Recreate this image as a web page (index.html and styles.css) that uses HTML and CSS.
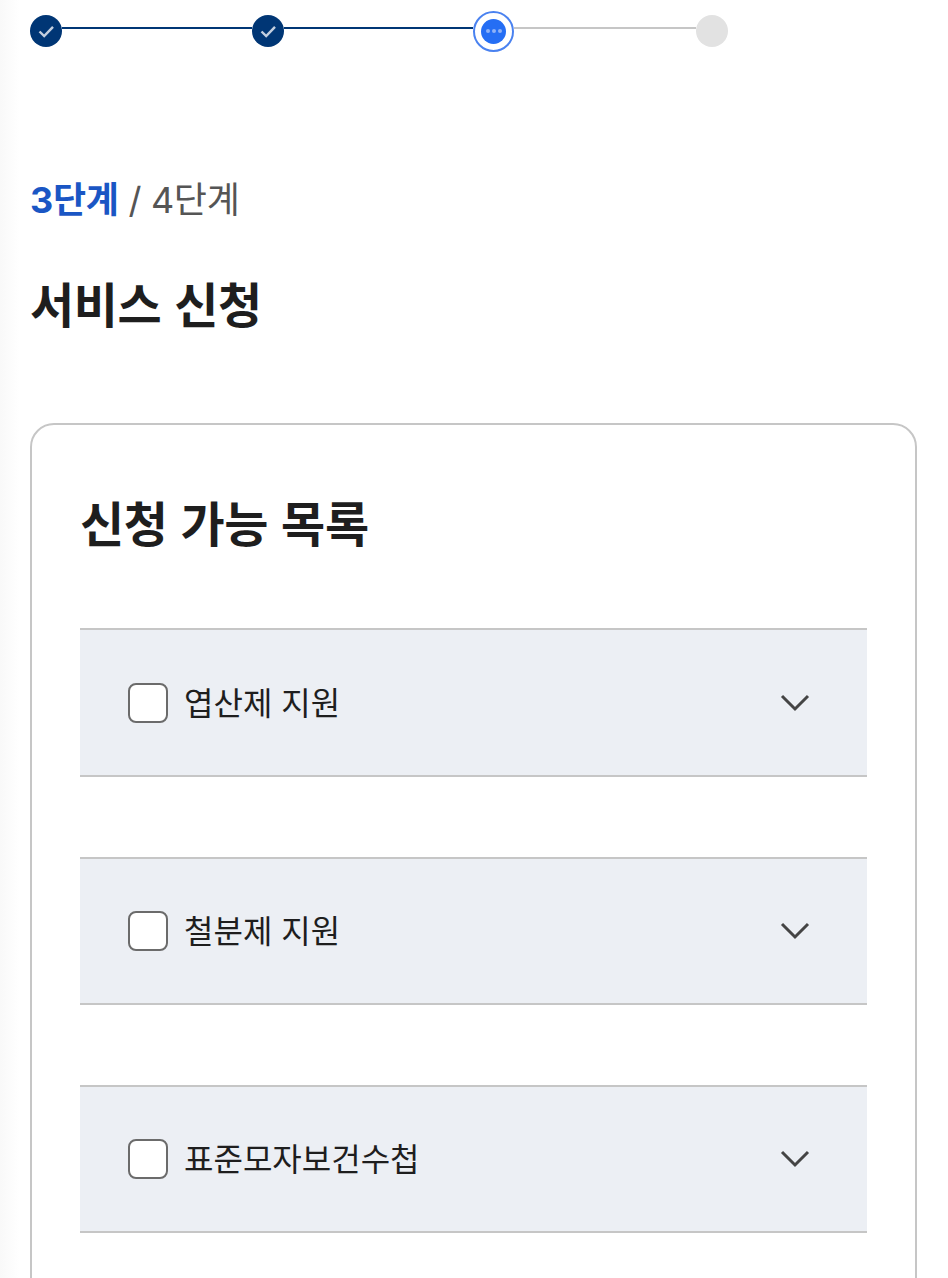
FILE: index.html
```html
<!DOCTYPE html>
<html lang="ko">

<head>
    <meta charset="UTF-8">
    <meta name="viewport" content="width=device-width, initial-scale=1.0">
    <title>서비스 신청</title>
    <link rel="stylesheet" href="styles.css">
</head>

<body>
    <main class="page">
        <ol class="stepper">
            <li class="step step-done">
                <svg class="step-icon" viewBox="0 0 18 14" width="17" height="13" aria-hidden="true">
                    <path d="M1.5 7 L6.5 12 L16 2" fill="none" stroke="#c3cfdf" stroke-width="2.6" />
                </svg>
            </li>
            <li class="step-line step-line-done"></li>
            <li class="step step-done">
                <svg class="step-icon" viewBox="0 0 18 14" width="17" height="13" aria-hidden="true">
                    <path d="M1.5 7 L6.5 12 L16 2" fill="none" stroke="#c3cfdf" stroke-width="2.6" />
                </svg>
            </li>
            <li class="step-line step-line-done step-line-short"></li>
            <li class="step step-current">
                <span class="step-dots"><i></i><i></i><i></i></span>
            </li>
            <li class="step-line"></li>
            <li class="step step-todo"></li>
        </ol>

        <p class="step-count"><strong>3단계</strong> / 4단계</p>
        <h1 class="page-title">서비스 신청</h1>

        <section class="panel">
            <h2 class="panel-title">신청 가능 목록</h2>
            <ul class="apply-list">
                <li class="apply-item">
                    <label class="apply-label"><span class="check-box"></span><span class="apply-text">엽산제 지원</span></label>
                    <svg class="chevron" viewBox="0 0 32 20" width="32" height="20" aria-hidden="true">
                        <path d="M3 3 L16 16 L29 3" fill="none" stroke="#444" stroke-width="3" />
                    </svg>
                </li>
                <li class="apply-item">
                    <label class="apply-label"><span class="check-box"></span><span class="apply-text">철분제 지원</span></label>
                    <svg class="chevron" viewBox="0 0 32 20" width="32" height="20" aria-hidden="true">
                        <path d="M3 3 L16 16 L29 3" fill="none" stroke="#444" stroke-width="3" />
                    </svg>
                </li>
                <li class="apply-item">
                    <label class="apply-label"><span class="check-box"></span><span class="apply-text">표준모자보건수첩</span></label>
                    <svg class="chevron" viewBox="0 0 32 20" width="32" height="20" aria-hidden="true">
                        <path d="M3 3 L16 16 L29 3" fill="none" stroke="#444" stroke-width="3" />
                    </svg>
                </li>
            </ul>
        </section>
    </main>
</body>

</html>
```

FILE: styles.css
```css
html,
body {
    margin: 0;
    padding: 0;
    height: 1278px;
    overflow: hidden;
}

body {
    background: linear-gradient(to right, #f9f9f9, #fff 20px);
    font-family: "Noto Sans CJK KR", "Noto Sans", sans-serif;
    color: #1e1e1e;
}

.page {
    padding: 15px 31px 0 30px;
}

.stepper {
    display: flex;
    align-items: center;
    width: 698px;
    height: 32px;
    margin: 0;
    padding: 0;
    list-style: none;
}

.step {
    display: flex;
    flex: none;
    align-items: center;
    justify-content: center;
    box-sizing: border-box;
    width: 32px;
    height: 32px;
    border-radius: 50%;
}

.step-done {
    background-color: #003675;
}

.step-current {
    width: 41px;
    height: 41px;
    border: 2px solid #4a82f0;
    background-color: #fff;
}

.step-todo {
    background-color: #e2e2e2;
}

.step-line {
    flex: 1;
    height: 2px;
    margin-top: -6px;
    background-color: #c6c6c6;
}

.step-line-done {
    flex: none;
    width: 190px;
    background-color: #003675;
}

.step-line-short {
    width: 189px;
}

.step-dots {
    display: flex;
    align-items: center;
    justify-content: center;
    gap: 2px;
    width: 25px;
    height: 25px;
    border-radius: 50%;
    background-color: #256ef4;
}

.step-dots i {
    width: 4px;
    height: 4px;
    border-radius: 50%;
    background-color: #8fb2f6;
}

.step-count {
    margin: 129px 0 0;
    font-family: Inter, "Noto Sans CJK KR", sans-serif;
    font-size: 36px;
    line-height: 48px;
    letter-spacing: -0.3px;
    color: #555;
}

.step-count strong {
    font-weight: 700;
    color: #1a56c4;
}

.page-title {
    margin: 46px 0 0;
    font-size: 48px;
    line-height: 64px;
    font-weight: 700;
    letter-spacing: -0.4px;
}

.panel {
    box-sizing: border-box;
    height: 1000px;
    margin-top: 89px;
    padding: 64px 48px 0;
    border: 2px solid #c6c6c6;
    border-radius: 24px;
}

.panel-title {
    margin: 0;
    font-size: 48px;
    line-height: 64px;
    font-weight: 700;
    letter-spacing: -0.4px;
}

.apply-list {
    margin: 75px 0 0;
    padding: 0;
    list-style: none;
}

.apply-item {
    display: flex;
    align-items: center;
    justify-content: space-between;
    box-sizing: border-box;
    height: 148px;
    margin-bottom: 80px;
    padding: 0 56px 0 48px;
    border-top: 2px solid #c6c6c6;
    border-bottom: 2px solid #c6c6c6;
    background-color: #eceff4;
}

.apply-item:first-child {
    height: 149px;
}

.apply-label {
    display: flex;
    align-items: center;
    gap: 16px;
    font-size: 32px;
    line-height: 44px;
    color: #1e1e1e;
}

.apply-text {
    margin-bottom: 4px;
}

.check-box {
    box-sizing: border-box;
    width: 40px;
    height: 40px;
    border: 2px solid #6b6b6b;
    border-radius: 8px;
    background-color: #fff;
}

.chevron {
    display: block;
}
```
